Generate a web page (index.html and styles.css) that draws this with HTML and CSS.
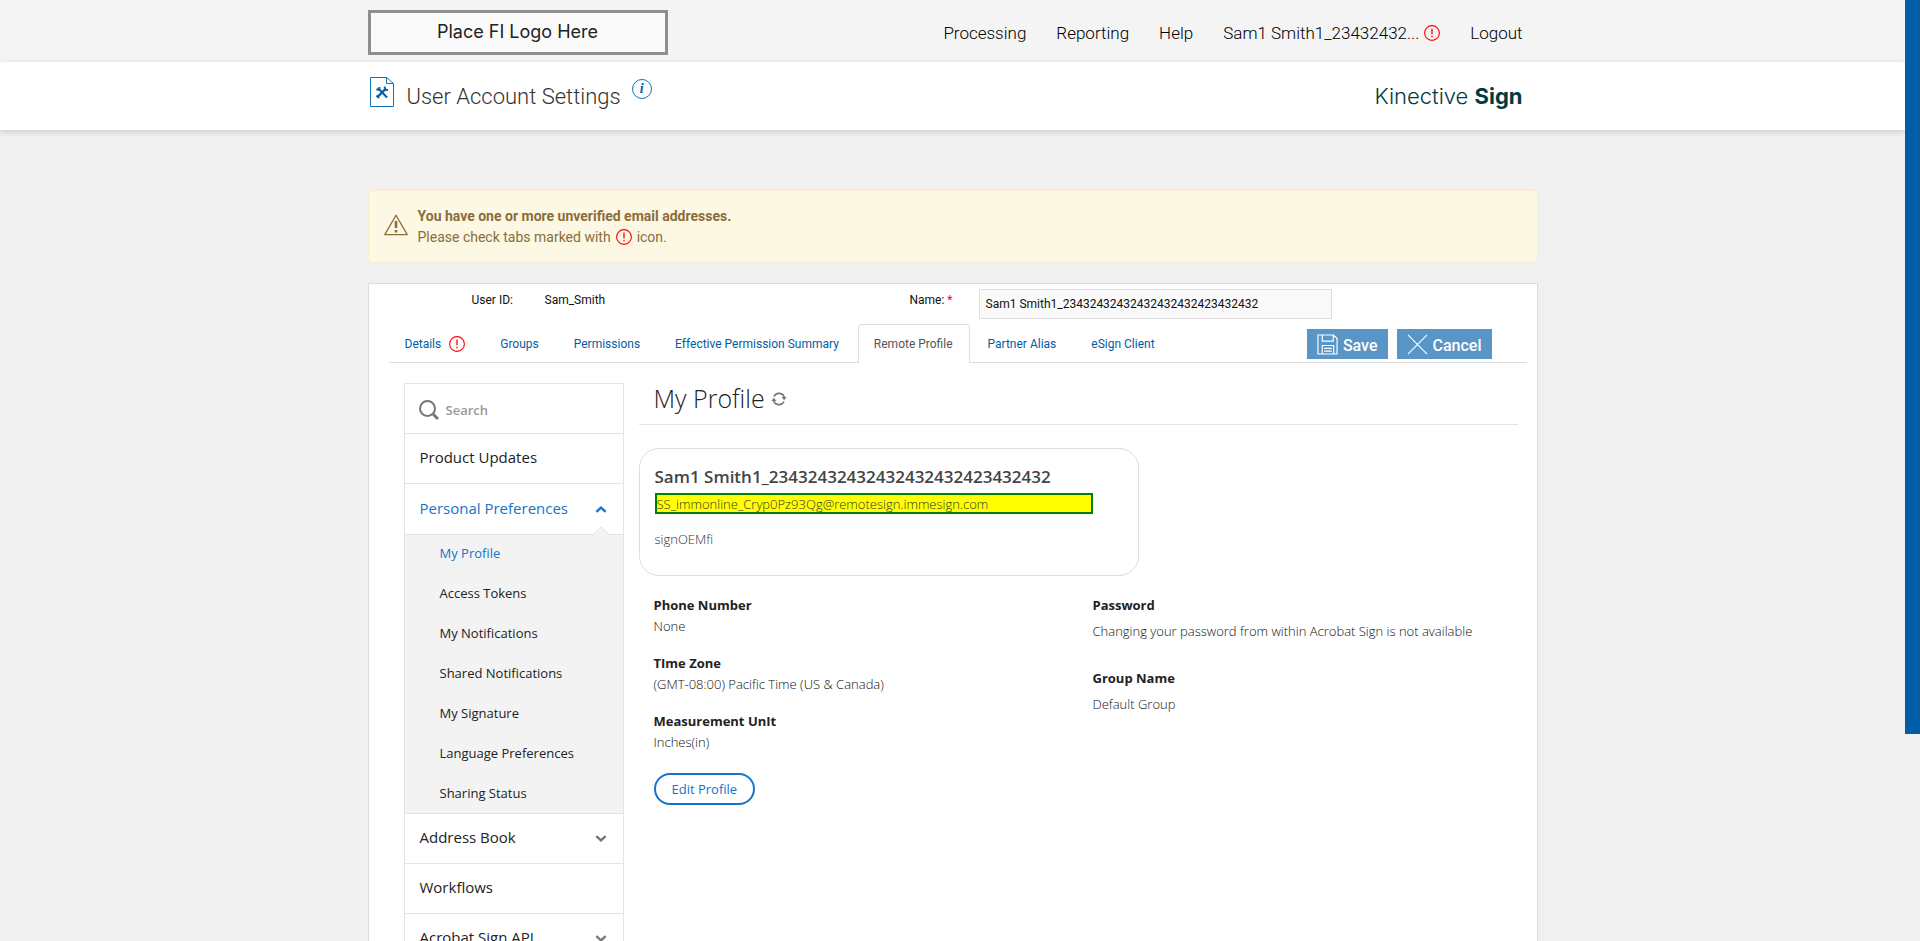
FILE: index.html
```html
<!DOCTYPE html>
<html lang="en">
<head>
<meta charset="utf-8">
<title>User Account Settings</title>
<link rel="stylesheet" href="styles.css">
</head>
<body>
<svg width="0" height="0" class="sprite" aria-hidden="true">
  <symbol id="alert" viewBox="0 0 16 16"><circle cx="8" cy="8" r="7.4" fill="none" stroke="#f00" stroke-width="1.1"/><path d="M8 3.6v5.6M8 10.8v1.4" stroke="#f00" stroke-width="1.3"/></symbol>
  <symbol id="down" viewBox="0 0 10 6"><path d="M1 1l4 3.6L9 1" fill="none" stroke="currentColor" stroke-width="2"/></symbol>
</svg>
<div class="window">
<div class="page">
  <header>
    <div class="topbar">
      <div class="container topbar-row">
        <div class="fi-logo">Place FI Logo Here</div>
        <nav class="main-nav">
          <a href="#">Processing</a>
          <a href="#">Reporting</a>
          <a href="#">Help</a>
          <a href="#" class="account">Sam1 Smith1_23432432... <svg class="badge"><use href="#alert"/></svg></a>
          <a href="#">Logout</a>
        </nav>
      </div>
    </div>
    <div class="titlebar">
      <div class="container title-row">
        <svg class="doc-icon" viewBox="0 0 24 30" fill="none" stroke="#1072b8"><path d="M.5.5h16l7 6v23H.5z"/><path d="M16.500 .5v6h7"/><path d="M8 11l9 9.500" stroke="#0060a8" stroke-width="2"/><path d="M16 11.500l-8.500 8.500" stroke="#0060a8" stroke-width="2.400"/><path d="M6.300 12.300l2.800.7.4-3M14.600 9.500l.5 3.200 3 .3M6.500 18.500l2.500 2.500" stroke="#0060a8" stroke-width="1.800"/></svg>
        <h1>User Account Settings</h1>
        <button class="info" aria-label="Information"><i>i</i></button>
        <div class="brand">Kinective <b>Sign</b></div>
      </div>
    </div>
  </header>

  <main class="container">
    <section class="notice" role="alert">
      <svg class="warn" viewBox="0 0 24 22" fill="none" stroke="#8a6d3b" stroke-width="1.300"><path d="M12 1.200L23.200 20.600H.8z" stroke-linejoin="round"/><path d="M12 7v7M12 16v2.500" stroke-width="2.600"/></svg>
      <div>
        <strong>You have one or more unverified email addresses.</strong>
        <p>Please check tabs marked with <svg class="badge"><use href="#alert"/></svg> icon.</p>
      </div>
    </section>

    <section class="panel">
      <div class="identity">
        <span class="id-label">User ID:</span>
        <span class="id-value">Sam_Smith</span>
        <label for="name">Name: <em>*</em></label>
        <input id="name" type="text" value="Sam1 Smith1_23432432432432432432423432432">
      </div>
      <div class="tabbar">
        <nav class="tabs">
          <a href="#">Details <svg class="badge"><use href="#alert"/></svg></a>
          <a href="#">Groups</a>
          <a href="#">Permissions</a>
          <a href="#">Effective Permission Summary</a>
          <a href="#" class="active" aria-current="page">Remote Profile</a>
          <a href="#">Partner Alias</a>
          <a href="#">eSign Client</a>
        </nav>
        <div class="actions">
          <button><svg viewBox="0 0 22 22" fill="none" stroke="#fff" stroke-width="1.200"><path d="M1 1h16l4 3.500V21H1zM5.500 1v6.500h11.500V1M5.500 21v-9h12v9M7.500 15h8M7.500 18h8"/></svg><span>Save</span></button>
          <button><svg viewBox="0 0 22 22" fill="none" stroke="#fff" stroke-width="1.200"><path d="M1 1l20 20M21 1L1 21"/></svg><span>Cancel</span></button>
        </div>
      </div>

      <div class="body">
        <aside class="side">
          <div class="search">
            <svg viewBox="0 0 20 20" fill="none" stroke="#777" stroke-width="2"><circle cx="8.500" cy="8.500" r="7.500"/><path d="M14 14l5 5" stroke-width="3"/></svg>
            <input type="search" placeholder="Search" aria-label="Search">
          </div>
          <a href="#" class="item">Product Updates</a>
          <a href="#" class="item open">Personal Preferences <svg class="chev up"><use href="#down"/></svg></a>
          <nav class="submenu">
            <svg class="notch" viewBox="0 0 18 10"><path d="M0 9.500L9 .7l9 8.800z" fill="#f3f3f3"/><path d="M0 9.500L9 .7l9 8.800" fill="none" stroke="#e3e3e3"/></svg>
            <a href="#" class="current">My Profile</a>
            <a href="#">Access Tokens</a>
            <a href="#">My Notifications</a>
            <a href="#">Shared Notifications</a>
            <a href="#">My Signature</a>
            <a href="#">Language Preferences</a>
            <a href="#">Sharing Status</a>
          </nav>
          <a href="#" class="item">Address Book <svg class="chev"><use href="#down"/></svg></a>
          <a href="#" class="item">Workflows</a>
          <a href="#" class="item">Acrobat Sign API <svg class="chev"><use href="#down"/></svg></a>
        </aside>

        <div class="profile">
          <div class="heading">
            <h2>My Profile</h2>
            <svg viewBox="0 0 16 14" fill="none" stroke="#777" stroke-width="1.600"><path d="M3 4.500A5.500 5.500 0 0 1 13.400 6M13 9.500A5.500 5.500 0 0 1 2.600 8"/><path d="M10.600 5h5l-2.500 3.300zM.4 9h5L2.900 5.700z" fill="#777" stroke="none"/></svg>
          </div>
          <div class="card">
            <h3>Sam1 Smith1_23432432432432432432423432432</h3>
            <div class="email">SS_immonline_Cryp0Pz93Qg@remotesign.immesign.com</div>
            <p>signOEMfi</p>
          </div>
          <div class="columns">
            <dl>
              <dt>Phone Number</dt><dd>None</dd>
              <dt>TIme Zone</dt><dd>(GMT-08:00) Pacific Time (US &amp; Canada)</dd>
              <dt>Measurement UnIt</dt><dd>Inches(in)</dd>
            </dl>
            <dl class="loose">
              <dt>Password</dt><dd>Changing your password from within Acrobat Sign is not available</dd>
              <dt>Group Name</dt><dd>Default Group</dd>
            </dl>
          </div>
          <button class="edit">Edit Profile</button>
        </div>
      </div>
    </section>
  </main>
</div>
<div class="scroll"><div class="thumb"></div></div>
</div>
</body>
</html>
```

FILE: styles.css
```css
* { box-sizing: border-box; }
body { margin: 0; font: 12px/18px Roboto, sans-serif; color: #111; background: #f0f0f0; }
a { color: inherit; text-decoration: none; }
h1, h2, h3, p, dl, dd { margin: 0; }
button, input { font: inherit; }
.sprite { position: absolute; }
.window { display: grid; grid-template-columns: minmax(0, 1fr) 15px; height: 100vh; overflow: hidden; }
.page { min-width: 0; overflow: hidden; }
.thumb { height: 78vh; background: #005da6; }
.container { width: 100%; max-width: 1170px; margin: 0 auto; }
.badge { width: 16px; height: 16px; flex: none; }

.topbar { background: #f4f4f4; }
.topbar-row { display: flex; justify-content: space-between; align-items: center; height: 62px; padding: 3px 15px 0 0; }
.fi-logo { width: 300px; height: 45px; border: 3px solid #8e8e8e; background: #fafafa; font: 18px/37px Inter, sans-serif; color: #222; text-align: center; }
.main-nav { display: flex; gap: 30px; font-size: 17px; font-weight: 300; color: #000; }
.account { display: flex; align-items: center; gap: 5px; }

.titlebar { position: relative; background: #fff; box-shadow: 0 2px 6px rgba(0, 0, 0, .15); }
.title-row { display: flex; align-items: center; height: 68px; padding: 0 15px 0 1px; }
.doc-icon { width: 24px; height: 30px; margin: 0 13px 8px 1px; }
h1 { padding-top: 2px; font-size: 22px; font-weight: 300; line-height: 28px; color: #333; }
.info { width: 20px; height: 20px; margin: 0 0 14px 11px; padding: 0; border: 1px solid #1072b8; border-radius: 50%; background: none; color: #0060a8; font: bold 14px/16px "Liberation Serif", serif; }
.brand { margin-left: auto; font: 300 22px/28px Inter, sans-serif; color: #003b40; }
.brand b { font-weight: 700; }

.notice { display: flex; align-items: center; gap: 10px; height: 73px; margin-top: 60px; padding: 0 15px; border: 1px solid #faebcc; border-radius: 4px; background: #fcf8e3; color: #8a6d3b; font-size: 14px; line-height: 21px; }
.warn { width: 24px; height: 22px; margin-top: -4px; }
.notice p { display: flex; align-items: center; gap: 5px; }

.panel { margin-top: 20px; padding: 0 10px 0 20px; border: 1px solid #ddd; background: #fff; }
.identity { display: grid; grid-template-columns: 73px 365px 69px 353px; padding: 5px 0 0 83px; height: 40px; }
.identity span, .identity label { line-height: 22px; }
.identity em { color: #f00; font-style: normal; }
.identity input { width: 353px; height: 30px; padding: 0 6px; border: 1px solid #ddd; background: #fafafa; color: #111; }
.tabbar { display: flex; justify-content: space-between; align-items: flex-end; border-bottom: 1px solid #ddd; }
.tabs { display: flex; gap: 2px; }
.tabs a { display: flex; align-items: center; gap: 8px; height: 39px; margin-bottom: -1px; padding: 0 16px 0 15px; border: 1px solid transparent; border-bottom: 0; color: #005da6; }
.tabs .active { border-color: #ddd; border-radius: 4px 4px 0 0; background: #fff; color: #555; }
.actions { display: flex; gap: 9px; margin: 0 35px 3px 0; }
.actions button { display: flex; align-items: center; gap: 5px; height: 30px; padding: 0 10px; border: 0; background: #5995c7; color: #fff; font-size: 16px; font-weight: 500; }
.actions svg { width: 21px; height: 21px; }
.actions span { padding-top: 4px; }

.body { display: flex; gap: 15px; padding: 20px 9px 20px 15px; font-family: "Open Sans", sans-serif; font-size: 13px; color: #222; }
.side { flex: none; width: 220px; border: 1px solid #e4e4e4; border-bottom: 0; align-self: flex-start; }
.search { display: flex; align-items: center; gap: 7px; height: 50px; padding: 2px 14px 0; border-bottom: 1px solid #e4e4e4; }
.search svg { width: 20px; height: 20px; flex: none; }
.search input { min-width: 0; width: 150px; height: 30px; padding: 0; border: 0; background: none; font-weight: 600; font-size: 13px; }
.search input::placeholder { color: #999; }
.item { display: flex; align-items: center; justify-content: space-between; height: 50px; padding: 0 16px 3px 15px; border-bottom: 1px solid #e4e4e4; font-size: 15px; }
.item.open { color: #1473cc; border-bottom: 0; }
.chev { width: 12px; height: 7px; margin-top: 3px; color: #777; }
.up { transform: rotate(180deg); color: #1473cc; }
.submenu { position: relative; background: #f3f3f3; box-shadow: inset 0 1px #e3e3e3, inset 0 -1px #e3e3e3; }
.submenu a { display: flex; align-items: center; height: 40px; padding: 0 0 2px 35px; }
.submenu .current { color: #1473cc; }
.notch { position: absolute; right: 13px; top: -8px; width: 18px; height: 10px; }

.profile { flex: 1; min-width: 0; }
.heading { display: flex; align-items: center; gap: 6px; height: 42px; padding: 0 0 12px 15px; border-bottom: 1px solid #e4e4e4; }
.heading svg { width: 16px; height: 14px; margin-top: 3px; }
h2 { font-size: 25px; font-weight: 300; }
.card { width: 500px; max-width: 100%; height: 128px; margin: 23px 0 19px; padding: 17px 45px 0 15px; border: 1px solid #ddd; border-radius: 20px; color: #333; }
h3 { font-size: 17px; font-weight: 600; line-height: 22px; margin-bottom: 5px; color: #444; }
.email { height: 21px; border: 2px solid #008000; background: #ff0; line-height: 18px; font-weight: 300; }
.card p { margin-top: 16px; font-weight: 300; }
.columns { display: grid; grid-template-columns: 439px 1fr; padding-left: 15px; line-height: 21px; }
dt { font-weight: 700; }
dd { margin-bottom: 16px; font-weight: 300; color: #111; }
.loose dd { margin: 5px 0 26px; }
.edit { display: block; height: 32px; margin: 4px 0 0 15px; padding: 0 16px; border: 2px solid #1473cc; border-radius: 16px; background: #fff; color: #1473cc; }
```
